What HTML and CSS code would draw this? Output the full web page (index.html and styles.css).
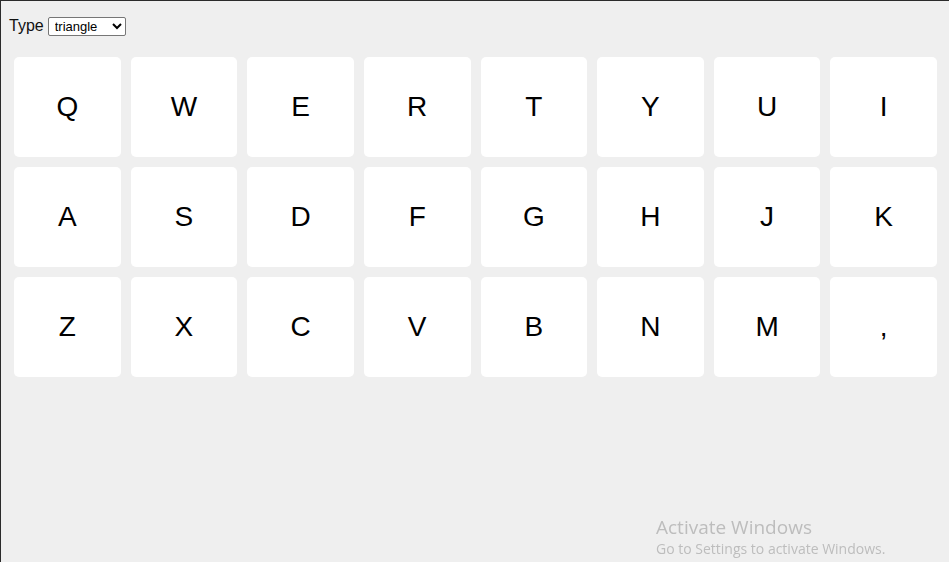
FILE: index.html
```html
<!DOCTYPE html>
<html lang="en">
<head>
<meta charset="utf-8">
<title>Keyboard</title>
<link rel="stylesheet" href="styles.css">
</head>
<body>
<div class="frame">
  <div class="toolbar">
    <label class="type-label" for="shape">Type</label>
    <select id="shape" class="type-select">
      <option>triangle</option>
      <option>square</option>
      <option>sine</option>
      <option>sawtooth</option>
    </select>
  </div>
  <div class="keyboard">
    <div class="key">Q</div><div class="key">W</div><div class="key">E</div><div class="key">R</div>
    <div class="key">T</div><div class="key">Y</div><div class="key">U</div><div class="key">I</div>
    <div class="key">A</div><div class="key">S</div><div class="key">D</div><div class="key">F</div>
    <div class="key">G</div><div class="key">H</div><div class="key">J</div><div class="key">K</div>
    <div class="key">Z</div><div class="key">X</div><div class="key">C</div><div class="key">V</div>
    <div class="key">B</div><div class="key">N</div><div class="key">M</div><div class="key">,</div>
  </div>
</div>
<div class="activation">
  <div class="activation-title">Activate Windows</div>
  <div class="activation-sub">Go to Settings to activate Windows.</div>
</div>
</body>
</html>
```
FILE: styles.css
```css
html, body {
  margin: 0;
  padding: 0;
  height: 100%;
}

body {
  background: #efefef;
  font-family: "Liberation Sans", Arial, sans-serif;
  overflow: hidden;
}

.frame {
  box-sizing: border-box;
  height: 100%;
  border-top: 1px solid #2b2b2b;
  border-left: 1px solid #2b2b2b;
  padding: 16px 12px 0 13px;
}

.toolbar {
  display: flex;
  align-items: center;
  gap: 4px;
  height: 18px;
  margin-left: -5px;
}

.type-label {
  font-size: 16px;
  color: #111;
}

.type-select {
  font-family: "Liberation Sans", Arial, sans-serif;
  font-size: 13px;
  width: 78px;
  height: 19px;
  padding: 0 2px;
  border: 1px solid #767676;
  border-radius: 2px;
  background: #fff;
  color: #000;
}

.keyboard {
  display: grid;
  grid-template-columns: repeat(8, 1fr);
  grid-auto-rows: 100px;
  gap: 10px;
  margin-top: 22px;
}

.key {
  background: #fff;
  border-radius: 5px;
  display: flex;
  align-items: center;
  justify-content: center;
  font-size: 28px;
  color: #000;
}

.activation {
  position: fixed;
  left: 656px;
  top: 515px;
  color: #bdbdbd;
  font-family: "Open Sans", "Noto Sans", sans-serif;
  pointer-events: none;
}

.activation-title {
  font-size: 19px;
  line-height: 24px;
}

.activation-sub {
  font-size: 14px;
  line-height: 20px;
}
```
